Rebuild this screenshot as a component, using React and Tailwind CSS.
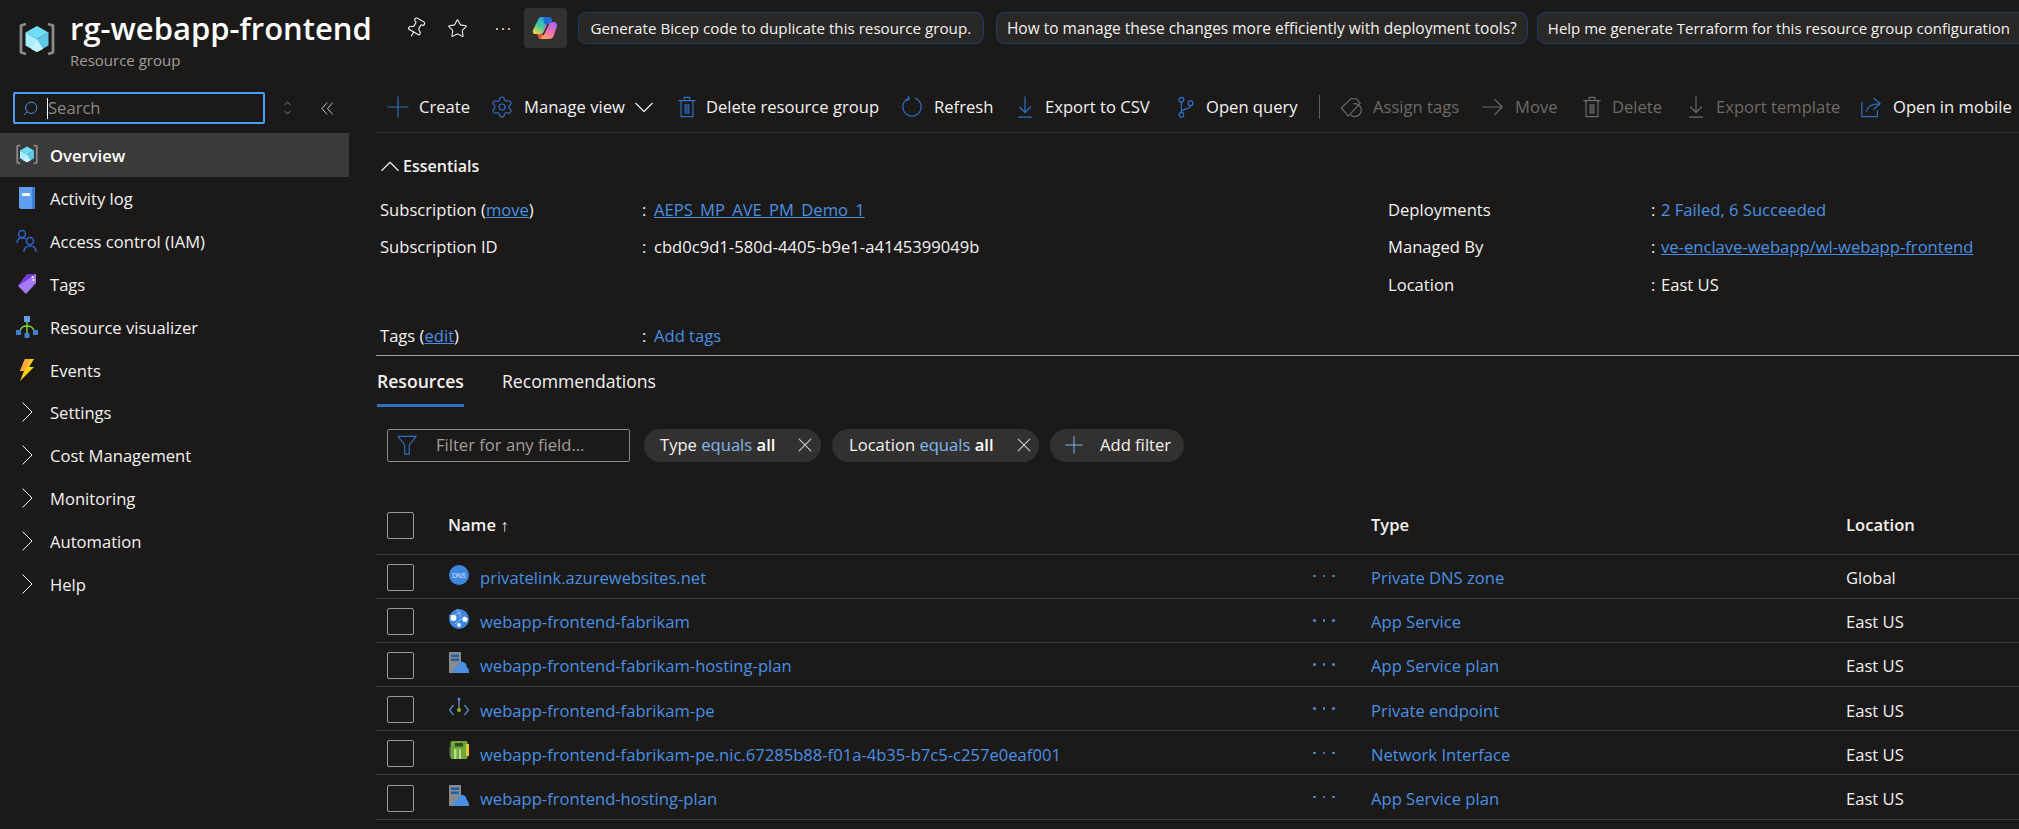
import React from 'react';
import { ChevronUp, ChevronDown, Settings, Star, Pin, Search } from 'lucide-react';

const BLUE = '#2f6fc4';
const GREY = '#6b6b6b';

const Line = ({ size = 22, color = BLUE, width = 1.3, children }) => (
  <svg width={size} height={size} viewBox="0 0 24 24" fill="none" stroke={color} strokeWidth={width} strokeLinecap="round" strokeLinejoin="round" className="shrink-0">
    {children}
  </svg>
);

const PlusIcon = ({ size, color }) => <Line size={size} color={color}><path d="M12 1V23M1 12H23" /></Line>;

const CloseIcon = () => <Line size={14} color="#d2d0ce" width={1.8}><path d="M2 2L22 22M22 2L2 22" /></Line>;

const ChevronDownLine = ({ color = '#f3f2f1' }) => <Line size={18} color={color} width={1.5}><path d="M1 7L12 18L23 7" /></Line>;

const ChevronUpLine = () => <Line size={18} color="#f3f2f1" width={1.5}><path d="M1 18L12 7L23 18" /></Line>;

const TrashIcon = ({ color }) => (
  <Line color={color}>
    <path d="M3 5H21M9 5V1.5H15V5M5.5 5V22.5H18.5V5M10 9V19M12 9V19M14 9V19" />
  </Line>
);

const ExportIcon = ({ color }) => (
  <Line color={color}><path d="M12 1V18M6 12L12 18L18 12M5 23H19" /></Line>
);

const ResourceGroupIcon = ({ size = 36 }) => (
  <svg width={size} height={size} viewBox="0 0 36 36" className="shrink-0">
    <path d="M7 2L2 3.5V30.5L7 32" fill="none" stroke="#8a8a8a" strokeWidth="2.8" strokeLinejoin="round" />
    <path d="M29 2L34 3.5V30.5L29 32" fill="none" stroke="#8a8a8a" strokeWidth="2.8" strokeLinejoin="round" />
    <path d="M18 4L29.5 10.5L18 17L6.5 10.5Z" fill="#6fdcf8" />
    <path d="M18 17L29.5 10.5V23.5L18 30Z" fill="#5fc8e6" />
    <path d="M18 17L6.5 10.5V23.5L18 30Z" fill="#a8eeff" />
    <path d="M18 17L24 27L18 30L12 27Z" fill="#c3f1ff" />
  </svg>
);

const CopilotIcon = () => (
  <svg width="26" height="24" viewBox="0 0 26 24" className="shrink-0">
    <defs>
      <linearGradient id="cpA" x1="0.8" y1="0" x2="0.2" y2="1">
        <stop offset="0" stopColor="#2aa0f2" />
        <stop offset="0.55" stopColor="#3ec9a0" />
        <stop offset="1" stopColor="#f2d44c" />
      </linearGradient>
      <linearGradient id="cpB" x1="0.7" y1="0" x2="0.3" y2="1">
        <stop offset="0" stopColor="#a868ec" />
        <stop offset="0.55" stopColor="#ee6fb2" />
        <stop offset="1" stopColor="#f7a65a" />
      </linearGradient>
    </defs>
    <path d="M7 2Q8 1 10 1H18L12 16Q11 18 8 18H3Q0 18 1 14Z" fill="url(#cpA)" />
    <path d="M18 6H22Q25 6 25 10L22 19Q21 23 17 23H8L14 8Q15 6 18 6Z" fill="url(#cpB)" />
    <path d="M11 1H17Q20 1 20 5V7H17Q15 7 14 9L12 7Z" fill="#1f6fd8" />
    <path d="M5 18H9Q11 18 11.5 17L9 23Q6 23 6 20Z" fill="#e8553f" />
    <path d="M16.5 7.5L11 19" stroke="#2b2b2b" strokeWidth="1.6" />
  </svg>
);

const BookIcon = () => (
  <svg width="20" height="24" viewBox="0 0 20 24">
    <path d="M2 1H18V23H4Q2 23 2 21Z" fill="#5ea0ef" />
    <path d="M15 1H18V23H15Z" fill="#3f7fd0" />
    <rect x="5" y="7" width="8" height="3" fill="#f3f2f1" />
  </svg>
);

const PeopleIcon = () => (
  <svg width="22" height="24" viewBox="0 0 22 24" fill="none" stroke="#2f62c9" strokeWidth="1.5">
    <circle cx="6" cy="5" r="3.5" />
    <path d="M1 14Q1 9 6 9Q9 9 10 10" />
    <circle cx="14" cy="12" r="3.5" />
    <path d="M8 23Q8 17 14 17Q20 17 20 23" />
  </svg>
);

const TagIcon = () => (
  <svg width="20" height="22" viewBox="0 0 20 22">
    <path d="M10 1H19V10L9 21L1 13Z" fill="#a67af4" />
    <path d="M10 1H19L1 13Z" fill="#6f3bd0" />
    <circle cx="15.5" cy="4" r="1" fill="#fff" />
    <circle cx="16.5" cy="7" r="1" fill="#fff" />
  </svg>
);

const VisualizerIcon = () => (
  <svg width="22" height="22" viewBox="0 0 22 22">
    <path d="M11 5V18M4 15Q5 10 11 10Q17 10 18 15" fill="none" stroke="#86d633" strokeWidth="1.4" />
    <rect x="8" y="0" width="6" height="6" fill="#5ea0ef" />
    <rect x="0" y="14" width="5" height="5" fill="#3f7fd0" />
    <rect x="17" y="14" width="5" height="5" fill="#3f7fd0" />
    <rect x="8.5" y="17" width="5" height="5" fill="#3f7fd0" />
  </svg>
);

const BoltIcon = () => (
  <svg width="16" height="22" viewBox="0 0 16 22">
    <path d="M6 0H15L10 8H15L1 22L5 12H1Z" fill="#fcd116" />
    <path d="M6 0H11L6 12H1Z" fill="#f7a83a" />
  </svg>
);

const DnsIcon = () => (
  <svg width="20" height="20" viewBox="0 0 20 20">
    <circle cx="10" cy="10" r="10" fill="#3f86de" />
    <text x="10" y="12.5" textAnchor="middle" fontSize="6.5" fill="#dcebfb" fontFamily="Liberation Sans, sans-serif">DNS</text>
  </svg>
);

const AppServiceIcon = () => (
  <svg width="20" height="20" viewBox="0 0 20 20">
    <circle cx="10" cy="10" r="10" fill="#3f86de" />
    <path d="M8 0L12 8M0 7Q6 7 12 3M6 15L16 7" stroke="#a9cdf5" strokeWidth="0.8" fill="none" />
    <circle cx="4.5" cy="9" r="3" fill="#fff" />
    <circle cx="16" cy="10.5" r="2.5" fill="#fff" />
    <circle cx="10" cy="16" r="2" fill="#e3effc" />
  </svg>
);

const PlanIcon = () => (
  <svg width="20" height="21" viewBox="0 0 20 21">
    <rect x="0" y="0" width="12" height="21" fill="#8a8a8a" />
    <rect x="2" y="2.5" width="8" height="2.5" fill="#1f5fa8" />
    <rect x="2" y="6.5" width="8" height="2.5" fill="#1f5fa8" />
    <path d="M4 21Q4 15 8 15Q9 9 14 10Q18 11 17.5 15Q20 16 20 21Z" fill="#4a90e2" />
  </svg>
);

const EndpointIcon = () => (
  <svg width="20" height="20" viewBox="0 0 20 20" fill="none">
    <path d="M10 2V13" stroke="#8a9aa8" strokeWidth="1.2" />
    <circle cx="10" cy="2" r="1.6" fill="#3f86de" />
    <circle cx="10" cy="13" r="2" fill="#7fb82e" />
    <path d="M4.5 8L0.5 13L4.5 18M15.5 8L19.5 13L15.5 18" stroke="#4f8bc9" strokeWidth="1.3" />
  </svg>
);

const NicIcon = () => (
  <svg width="20" height="20" viewBox="0 0 20 20">
    <rect x="0" y="6" width="2" height="9" fill="#444" />
    <rect x="1.5" y="0" width="17" height="18" rx="1.5" fill="#6fa83a" />
    <rect x="17" y="3" width="3" height="12" fill="#e8c33c" />
    <rect x="6" y="2" width="8" height="3.5" fill="#2e4d1a" />
    <rect x="5" y="8" width="2.5" height="10" fill="#b8dc8c" />
    <rect x="10" y="8" width="2" height="10" fill="#b8dc8c" />
  </svg>
);

const NavItem = ({ icon, label, active }) => (
  <div className={`flex items-center ${active ? 'h-[44px] bg-[#3b3a39] font-semibold text-white' : 'h-[42.8px] text-[#f3f2f1]'}`}>
    <span className="flex w-[50px] shrink-0 justify-center pl-[4px]">{icon}</span>
    <span className="pt-[2px]">{label}</span>
  </div>
);

const Group = ({ label }) => (
  <NavItem label={label} icon={<Line size={20} color="#f3f2f1" width={1.2}><path d="M7 1L18 12L7 23" /></Line>} />
);

const ToolItem = ({ icon, label, disabled, className }) => (
  <div className={`flex shrink-0 items-center whitespace-nowrap ${disabled ? 'text-[#6b6b6b]' : 'text-[#f3f2f1]'} ${className}`}>
    {icon}
    <span>{label}</span>
  </div>
);

const FilterPill = ({ children, className }) => (
  <div className={`flex h-[33px] items-center rounded-full bg-[#323130] text-[#f3f2f1] ${className}`}>{children}</div>
);

const Checkbox = () => <div className="mt-[2px] h-[27px] w-[27px] rounded-[2px] border border-[#9a9a9a]" />;

const rows = [
  { icon: <DnsIcon />, name: 'privatelink.azurewebsites.net', type: 'Private DNS zone', location: 'Global' },
  { icon: <AppServiceIcon />, name: 'webapp-frontend-fabrikam', type: 'App Service', location: 'East US' },
  { icon: <PlanIcon />, name: 'webapp-frontend-fabrikam-hosting-plan', type: 'App Service plan', location: 'East US' },
  { icon: <EndpointIcon />, name: 'webapp-frontend-fabrikam-pe', type: 'Private endpoint', location: 'East US' },
  { icon: <NicIcon />, name: 'webapp-frontend-fabrikam-pe.nic.67285b88-f01a-4b35-b7c5-c257e0eaf001', type: 'Network Interface', location: 'East US' },
  { icon: <PlanIcon />, name: 'webapp-frontend-hosting-plan', type: 'App Service plan', location: 'East US' },
];

const Sidebar = () => (
  <aside className="w-[376px] shrink-0 pt-[7px]">
    <div className="flex h-[32px] items-center">
      <div className="ml-[13px] flex h-[32px] w-[252px] items-center rounded-[2px] border-2 border-[#479ef5] pl-[7px]">
        <Search size={17} strokeWidth={1.3} color="#479ef5" className="-scale-x-100" />
        <span className="ml-[8px] h-[21px] w-px bg-white" />
        <span className="text-[#8a8886]">Search</span>
      </div>
      <div className="ml-[16px] flex w-[12px] flex-col items-center text-[#d2d0ce]">
        <ChevronUp size={11} strokeWidth={1.2} className="-mb-[2px]" />
        <ChevronDown size={11} strokeWidth={1.2} />
      </div>
      <div className="ml-[27px]">
        <Line size={15} color="#d2d0ce" width={1.5}><path d="M11 3L3 12L11 21M20 3L12 12L20 21" /></Line>
      </div>
    </div>
    <nav className="mt-[9px] w-[349px]">
      <NavItem active label="Overview" icon={<ResourceGroupIcon size={22} />} />
      <NavItem label="Activity log" icon={<BookIcon />} />
      <NavItem label="Access control (IAM)" icon={<PeopleIcon />} />
      <NavItem label="Tags" icon={<TagIcon />} />
      <NavItem label="Resource visualizer" icon={<VisualizerIcon />} />
      <NavItem label="Events" icon={<BoltIcon />} />
      <Group label="Settings" />
      <Group label="Cost Management" />
      <Group label="Monitoring" />
      <Group label="Automation" />
      <Group label="Help" />
    </nav>
  </aside>
);

const Toolbar = () => (
  <div className="flex h-[48px] items-center overflow-hidden border-b border-[#323130] pb-[3px] pl-[11px]">
    <ToolItem className="w-[104px] gap-[10px]" label="Create" icon={<PlusIcon />} />
    <ToolItem className="w-[185px] gap-[11px]" label={<span className="flex items-center gap-[10px]">Manage view <ChevronDownLine /></span>} icon={<Settings size={24} strokeWidth={1.2} color={BLUE} className="-mx-px" />} />
    <ToolItem className="w-[225px] gap-[8px]" label="Delete resource group" icon={<TrashIcon />} />
    <ToolItem className="w-[113px] gap-[11px]" label="Refresh" icon={
      <Line><path d="M8.5 2.5A10 10 0 1 0 15.5 2.5M8 0.5L9 3.5L5.5 5" /></Line>
    } />
    <ToolItem className="w-[161px] gap-[9px]" label="Export to CSV" icon={<ExportIcon />} />
    <ToolItem className="w-[144px] gap-[9px]" label="Open query" icon={
      <Line><circle cx="7" cy="4" r="2.6" /><circle cx="7" cy="20.5" r="2.6" /><circle cx="17" cy="8" r="2.6" /><path d="M7 6.6V18M17 10.6C17 15 7 13 7 18" /></Line>
    } />
    <div className="mr-[20px] h-[24px] w-px bg-[#605e5c]" />
    <ToolItem disabled className="w-[142px] gap-[11px]" label="Assign tags" icon={
      <Line color={GREY}><path d="M1.5 13L12 3H18L22 8L9 22Z" /><path d="M15 8.5A7 7 0 1 1 12 21" /></Line>
    } />
    <ToolItem disabled className="w-[99px] gap-[11px]" label="Move" icon={<Line color={GREY}><path d="M1 12H22M14 4L22 12L14 20" /></Line>} />
    <ToolItem disabled className="w-[104px] gap-[9px]" label="Delete" icon={<TrashIcon color={GREY} />} />
    <ToolItem disabled className="w-[175px] gap-[9px]" label="Export template" icon={<ExportIcon color={GREY} />} />
    <ToolItem className="gap-[11px]" label="Open in mobile" icon={
      <Line><path d="M2 7V22.5H19V16M7 17C8 11 13 8.5 21 8.5M15 2.5L22 8.5L15 14.5" /></Line>
    } />
  </div>
);

const Link = ({ children }) => <a className="text-[#4a90e2] underline">{children}</a>;

const Essentials = () => (
  <section className="border-b border-[#a19f9d]">
    <div className="mt-[21px] flex h-[24px] items-center gap-[4px] pl-[5px] text-[16px] font-semibold text-[#f3f2f1]">
      <ChevronUpLine />
      Essentials
    </div>
    <div className="mt-[13px] grid grid-cols-[262px_12px_734px_263px_10px_1fr] pl-[4px] text-[#f3f2f1] [&>*]:flex [&>*]:h-[37.5px] [&>*]:items-center">
      <div><span>Subscription (<Link>move</Link>)</span></div>
      <div>:</div>
      <div><Link>AEPS_MP_AVE_PM_Demo_1</Link></div>
      <div>Deployments</div>
      <div>:</div>
      <div className="text-[#4a90e2]">2 Failed, 6 Succeeded</div>
      <div>Subscription ID</div>
      <div>:</div>
      <div>cbd0c9d1-580d-4405-b9e1-a4145399049b</div>
      <div>Managed By</div>
      <div>:</div>
      <div><Link>ve-enclave-webapp/wl-webapp-frontend</Link></div>
      <div />
      <div />
      <div />
      <div>Location</div>
      <div>:</div>
      <div>East US</div>
    </div>
    <div className="mt-[13px] grid h-[38px] grid-cols-[262px_12px_1fr] items-center pl-[4px] text-[#f3f2f1]">
      <div>Tags (<Link>edit</Link>)</div>
      <div>:</div>
      <div className="text-[#4a90e2]">Add tags</div>
    </div>
  </section>
);

const Tabs = () => (
  <div className="flex h-[51px] text-[17.6px]">
    <div className="ml-px flex h-full w-[87px] items-center border-b-[3px] border-[#2f6fc4] pt-[2px] font-semibold text-[#f3f2f1]">Resources</div>
    <div className="ml-[38px] flex h-full items-center text-[#f3f2f1]">Recommendations</div>
  </div>
);

const Filters = () => (
  <div className="mt-[22px] flex pl-[11px]">
    <div className="flex h-[33px] w-[243px] items-center rounded-[2px] border border-[#8a8886] pl-[8px] text-[#a19f9d]">
      <Line size={22}><path d="M2 2.5H22L14.5 12V22H9.5V12Z" /></Line>
      <span className="ml-[18px]">Filter for any field...</span>
    </div>
    <FilterPill className="ml-[14px] w-[177px] pl-[16px]">
      <span>Type <span className="text-[#81b6ee]">equals</span> <b className="font-semibold text-white">all</b></span>
      <span className="ml-auto mr-[9px]"><CloseIcon /></span>
    </FilterPill>
    <FilterPill className="ml-[11px] w-[207px] pl-[17px]">
      <span>Location <span className="text-[#81b6ee]">equals</span> <b className="font-semibold text-white">all</b></span>
      <span className="ml-auto mr-[8px]"><CloseIcon /></span>
    </FilterPill>
    <FilterPill className="ml-[11px] w-[134px] gap-[17px] pl-[15px]">
      <PlusIcon size={18} color="#81b6ee" />
      <span>Add filter</span>
    </FilterPill>
  </div>
);

const ResourceTable = () => (
  <div className="mt-[36px]">
    <div className="grid h-[57px] grid-cols-[73px_863px_59px_475px_1fr] items-center border-b border-[#3b3a39] font-semibold text-[#f3f2f1]">
      <div className="-mt-[3px] pl-[11px]"><Checkbox /></div>
      <div className="-ml-px pb-[2px]">Name ↑</div>
      <div />
      <div className="pb-[2px]">Type</div>
      <div className="pb-[2px]">Location</div>
    </div>
    {rows.map((row) => (
      <div key={row.name} className="grid h-[44.2px] grid-cols-[73px_863px_59px_475px_1fr] items-center border-b border-[#3b3a39]">
        <div className="pl-[11px]"><Checkbox /></div>
        <div className="flex items-center gap-[11px] text-[#4a90e2]">
          <span className="-mt-[3px] flex w-[20px] shrink-0">{row.icon}</span>
          <span className="mt-[4px] whitespace-nowrap">{row.name}</span>
        </div>
        <div className="flex gap-[7px] pl-[1px]">
          <span className="h-[2.5px] w-[2.5px] rounded-full bg-[#4a90e2]" />
          <span className="h-[2.5px] w-[2.5px] rounded-full bg-[#4a90e2]" />
          <span className="h-[2.5px] w-[2.5px] rounded-full bg-[#4a90e2]" />
        </div>
        <div className="mt-[4px] text-[#4a90e2]">{row.type}</div>
        <div className="mt-[4px] text-[#f3f2f1]">{row.location}</div>
      </div>
    ))}
  </div>
);

const Header = () => (
  <header className="flex h-[85px] overflow-hidden pt-[8px]">
    <div className="ml-[19px] mt-[14px]"><ResourceGroupIcon /></div>
    <div className="ml-[15px] w-[300px] shrink-0">
      <div className="text-[31px] font-semibold leading-[41px] whitespace-nowrap text-white">rg-webapp-frontend</div>
      <div className="mt-[2px] text-[15px] leading-[18px] text-[#a19f9d]">Resource group</div>
    </div>
    <div className="ml-[35px] flex h-[40px] items-center text-[#f3f2f1]">
      <Pin size={22} strokeWidth={1.2} className="rotate-[30deg]" />
      <Star size={21} strokeWidth={1.2} className="ml-[20px]" />
      <span className="ml-[27px] text-[15px] leading-none tracking-[2px]">···</span>
    </div>
    <div className="ml-[11px] flex h-[40px] w-[43px] shrink-0 items-center justify-center rounded-[4px] bg-[#323130]">
      <CopilotIcon />
    </div>
    <div className="mt-[4px] ml-[11px] flex h-[32px] w-[406px] shrink-0 items-center justify-center rounded-[8px] border border-[#1f3a64] bg-[#292827] text-[15.2px] whitespace-nowrap text-[#f3f2f1]">Generate Bicep code to duplicate this resource group.</div>
    <div className="mt-[4px] ml-[12px] flex h-[32px] w-[532px] shrink-0 items-center justify-center rounded-[8px] border border-[#1f3a64] bg-[#292827] text-[15.5px] whitespace-nowrap text-[#f3f2f1]">How to manage these changes more efficiently with deployment tools?</div>
    <div className="mt-[4px] ml-[9px] flex h-[32px] w-[520px] shrink-0 items-center rounded-[8px] border border-[#1f3a64] bg-[#292827] pl-[10px] text-[15px] whitespace-nowrap text-[#f3f2f1]">Help me generate Terraform for this resource group configuration</div>
  </header>
);

export default function App() {
  return (
    <div className="h-screen overflow-hidden bg-[#1b1a19] font-['Open_Sans',sans-serif] text-[16.6px] leading-[22px]">
      <Header />
      <div className="flex">
        <Sidebar />
        <main className="min-w-0 flex-1">
          <Toolbar />
          <Essentials />
          <Tabs />
          <Filters />
          <ResourceTable />
        </main>
      </div>
    </div>
  );
}
